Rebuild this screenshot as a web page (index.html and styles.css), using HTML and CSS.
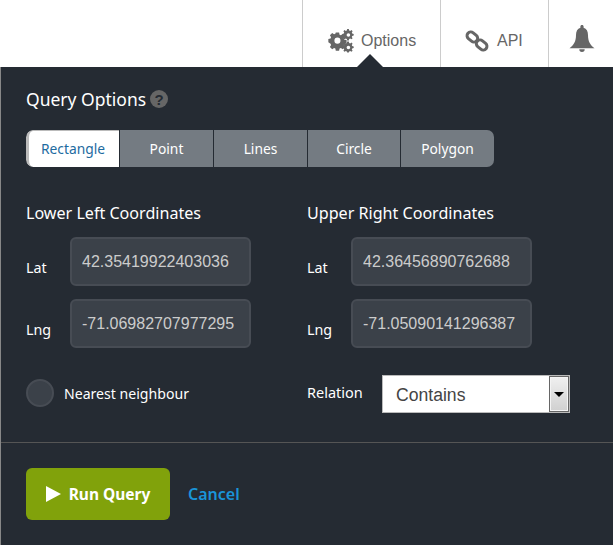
FILE: index.html
```html
<!DOCTYPE html>
<html lang="en">
<head>
<meta charset="utf-8">
<title>Query Options</title>
<link rel="stylesheet" href="styles.css">
</head>
<body>
<header class="topbar">
  <nav class="nav">
    <a class="nav-item nav-options">
      <svg class="icon-gears" viewBox="0 0 26 24" width="26" height="24"><g fill="#666"><path fill-rule="evenodd" d="M7.6 5.5h3.6l.5 2.4 1.4.6 2-1.3 2.5 2.5-1.3 2 .6 1.5 2.4.5v3.5l-2.4.5-.6 1.4 1.3 2-2.5 2.5-2-1.3-1.4.6-.5 2.3H7.6l-.5-2.3-1.4-.6-2 1.3-2.5-2.5 1.3-2-.6-1.4L-.5 16v-3.5l2.4-.5.6-1.5-1.3-2 2.5-2.5 2 1.3 1.4-.6zM9.400 11a3.300 3.300 0 1 0 0 6.600a3.300 3.300 0 0 0 0-6.600z" transform="translate(0.800 -1.500) scale(.92)"/><path fill-rule="evenodd" d="M20 0l.8 0 .4 1.500 1 .4 1.300-.8 1.100 1.100-.8 1.300.4 1 1.500.4v1.600l-1.500.4-.4 1 .8 1.300-1.100 1.100-1.300-.8-1 .4-.4 1.500h-1.600l-.4-1.500-1-.4-1.300.8-1.100-1.100.8-1.300-.4-1-1.500-.4V4.900l1.500-.4.4-1-.8-1.300 1.100-1.100 1.300.8 1-.4.400-1.500zM20.400 4.200a1.800 1.800 0 1 0 0 3.600a1.800 1.800 0 0 0 0-3.600z"/><path fill-rule="evenodd" d="M20 12.500l.8 0 .4 1.500 1 .4 1.300-.8 1.100 1.100-.8 1.300.4 1 1.500.4V19l-1.500.4-.4 1 .8 1.300-1.100 1.100-1.300-.8-1 .4-.4 1.100h-1.600l-.4-1.100-1-.4-1.300.8-1.100-1.100.8-1.300-.4-1-1.500-.4v-1.600l1.500-.4.4-1-.8-1.300 1.100-1.100 1.300.8 1-.4.400-1.500zM20.400 16.700a1.800 1.800 0 1 0 0 3.600a1.800 1.800 0 0 0 0-3.600z"/></g></svg>
      <span>Options</span>
    </a>
    <a class="nav-item nav-api">
      <svg class="icon-link" viewBox="0 0 24 24" width="24" height="24"><g fill="none" stroke="#666" stroke-width="3"><rect x="1.500" y="4" width="11.500" height="7.500" rx="3.700" transform="rotate(40 7 8)"/><rect x="11" y="12.500" width="11.500" height="7.500" rx="3.700" transform="rotate(40 17 16)"/></g></svg>
      <span>API</span>
    </a>
    <a class="nav-item nav-bell">
      <svg viewBox="0 0 26 28" width="26" height="28"><path fill="#666" d="M13 0c1 0 1.600.7 1.600 1.600v1.200c3 .9 4.400 3.600 4.400 7.200 0 6.500 2.200 10 6.500 13.300H.5C4.800 20 7 16.500 7 10c0-3.600 1.400-6.300 4.400-7.200V1.600C11.400.7 12 0 13 0zM10.300 24.200h5.400a2.700 2.700 0 0 1-5.400 0z"/></svg>
    </a>
  </nav>
</header>
<main class="panel">
  <section class="panel-body">
    <h2 class="title">Query Options <svg class="help" viewBox="0 0 18 18" width="18" height="18"><circle cx="9" cy="9" r="9" fill="#666"/><text x="9" y="14.500" class="help-mark">?</text></svg></h2>
    <div class="tabs">
      <button class="tab tab-active">Rectangle</button>
      <button class="tab tab-point">Point</button>
      <button class="tab tab-lines">Lines</button>
      <button class="tab tab-circle">Circle</button>
      <button class="tab tab-polygon">Polygon</button>
    </div>
    <div class="coords">
      <div class="coord-col">
        <h3 class="coord-title">Lower Left Coordinates</h3>
        <label class="field"><span class="field-label">Lat</span><input class="input" value="42.35419922403036"></label>
        <label class="field"><span class="field-label">Lng</span><input class="input" value="-71.06982707977295"></label>
        <div class="extra"><span class="radio"></span><span class="extra-label">Nearest neighbour</span></div>
      </div>
      <div class="coord-col">
        <h3 class="coord-title">Upper Right Coordinates</h3>
        <label class="field"><span class="field-label">Lat</span><input class="input" value="42.36456890762688"></label>
        <label class="field"><span class="field-label">Lng</span><input class="input" value="-71.05090141296387"></label>
        <div class="extra"><span class="relation-label">Relation</span>
          <div class="select"><span class="select-value">Contains</span><span class="select-btn"><span class="select-arrow"></span></span></div>
        </div>
      </div>
    </div>
  </section>
  <footer class="actions">
    <button class="run"><span class="play"></span>Run Query</button>
    <a class="cancel">Cancel</a>
  </footer>
</main>
</body>
</html>
```
FILE: styles.css
```css
* { box-sizing: border-box; }
html, body { margin: 0; padding: 0; }
body { width: 613px; height: 545px; overflow: hidden; background: #fff; font-family: "Noto Sans", sans-serif; display: flex; flex-direction: column; }
.topbar { height: 67px; display: flex; justify-content: flex-end; background: #fff; flex: none; }
.nav { display: flex; height: 67px; }
.nav-item { display: flex; align-items: center; border-left: 1px solid #ccc; color: #666; font-family: "Liberation Sans", sans-serif; font-size: 16px; position: relative; padding-top: 14px; }
.nav-options { width: 138px; padding-left: 25px; gap: 7px; }
.nav-options::after { content: ""; position: absolute; left: 54px; bottom: 0; border: 13px solid transparent; border-top: 0; border-bottom-color: #252b33; }
.nav-api { width: 108px; padding-left: 24px; gap: 8px; }
.nav-bell { width: 65px; padding-left: 20px; padding-top: 11px; }
.panel { flex: 1; background: #252b33; border-left: 1px solid #888; display: flex; flex-direction: column; color: #fff; }
.panel-body { padding: 19px 25px 0; height: 376px; border-bottom: 1px solid #555; }
.title { margin: 0; font-size: 17.500px; font-weight: 400; line-height: 26px; display: flex; align-items: center; gap: 4px; }
.help-mark { font: 700 15px "Liberation Sans", sans-serif; fill: #252b33; text-anchor: middle; }
.tabs { display: flex; margin-top: 18px; width: 468px; height: 37px; border-radius: 7px; overflow: hidden; }
.tab { border: 0; margin: 0; background: #747b82; color: #fff; font: 13.800px "Noto Sans", sans-serif; padding: 0; height: 37px; border-left: 1px solid #252b33; }
.tab-active { background: #fff; color: #1d6b9f; width: 93px; border-left: 3px solid #bbb; border-top: 1px solid #bbb; border-radius: 7px 0 0 7px; padding: 0 2px 1px 0; }
.tab-point { width: 94px; }
.tab-lines { width: 94px; }
.tab-circle { width: 93px; }
.tab-polygon { width: 94px; }
.coords { display: flex; margin-top: 33px; }
.coord-col { width: 281px; }
.coord-title { margin: 0 0 11px; font-size: 16.100px; font-weight: 400; line-height: 26px; }
.field { display: flex; align-items: center; height: 49px; margin-bottom: 13px; }
.field-label { width: 44px; font-size: 14.300px; padding-top: 12px; }
.input { width: 181px; height: 49px; background: #3b4149; border: 2px solid #474c54; border-radius: 6px; color: #ccc; font: 16px "Liberation Sans", sans-serif; padding: 0 10px; }
.extra { display: flex; align-items: center; height: 40px; margin-top: 25px; }
.radio { width: 28px; height: 28px; border-radius: 50%; background: #3b4149; border: 2px solid #474c54; margin-right: 10px; }
.extra-label { font-size: 14.100px; }
.relation-label { width: 75px; font-size: 14.500px; padding-bottom: 2px; }
.select { width: 188px; height: 38px; margin-top: 2px; background: #fff; border: 1px solid #bbb; display: flex; align-items: center; }
.select-value { flex: 1; padding: 2px 0 0 13px; color: #444; font: 17.600px "Liberation Sans", sans-serif; }
.select-btn { width: 20px; height: 36px; border: 1px solid #666; box-shadow: inset 0 0 0 1px #f4f4f4; background: linear-gradient(#f0f0f0, #d0d0d0); display: flex; align-items: center; justify-content: center; }
.select-arrow { border: 5px solid transparent; border-top: 5px solid #000; border-bottom: 0; }
.actions { display: flex; align-items: center; padding: 25px 25px 0; gap: 18px; }
.run { width: 144px; height: 52px; background: #81a20b; border: 0; border-radius: 6px; color: #fff; font: 700 15.500px "Noto Sans", sans-serif; display: flex; align-items: center; justify-content: center; gap: 8px; padding: 0; }
.play { border-left: 15px solid #fff; border-top: 8px solid transparent; border-bottom: 8px solid transparent; }
.cancel { color: #1a94d8; font-size: 16px; font-weight: 600; }
```
